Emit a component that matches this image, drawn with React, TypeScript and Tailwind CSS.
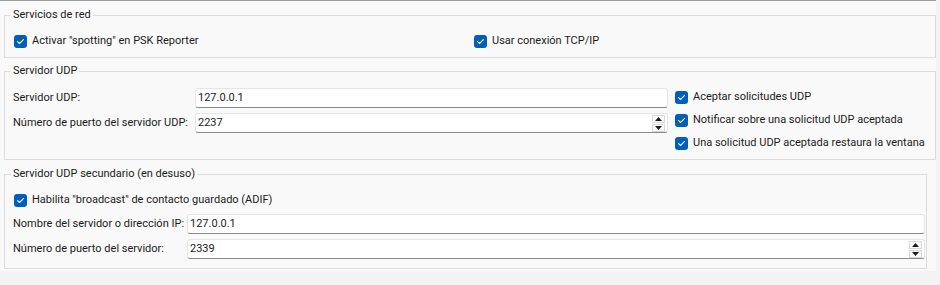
import React from "react";

const font = { fontFamily: 'Roboto, "Noto Sans", sans-serif' };

function Check({ label }: { label: string }) {
  return (
    <div className="flex h-[16px] items-center">
      <span className="flex h-[13px] w-[13px] items-center justify-center rounded-[3px] bg-[#005fb8]">
        <svg width="9" height="9" viewBox="0 0 9 9" fill="none">
          <path d="M1.6 4.7 L3.5 6.5 L7.4 2.6" stroke="white" strokeWidth="1.1" strokeLinecap="round" strokeLinejoin="round" />
        </svg>
      </span>
      <span className="ml-[5px] whitespace-nowrap text-[11px] leading-[16px] text-[#1b1b1b]">{label}</span>
    </div>
  );
}

function Input({ value, spin }: { value: string; spin?: boolean }) {
  return (
    <div className="flex h-[20px] flex-1 items-center rounded-[3px] border border-[#e5e5e5] border-b-[#8a8a8a] bg-white pl-[2px] pr-[2px]">
      <span className="flex-1 text-[11px] leading-[16px] text-[#1b1b1b]">{value}</span>
      {spin && (
        <div className="flex h-[17px] w-[13px] flex-col">
          <div className="flex h-[8px] items-center justify-center border border-[#d9d9d9] bg-[#fbfbfb]">
            <svg width="7" height="4" viewBox="0 0 7 4"><path d="M0 4 L3.5 0 L7 4 Z" fill="#1b1b1b" /></svg>
          </div>
          <div className="mt-[1px] flex h-[8px] items-center justify-center border border-[#d9d9d9] bg-[#fbfbfb]">
            <svg width="7" height="4" viewBox="0 0 7 4"><path d="M0 0 L3.5 4 L7 0 Z" fill="#1b1b1b" /></svg>
          </div>
        </div>
      )}
    </div>
  );
}

function Group({ title, className, children }: { title: string; className?: string; children: React.ReactNode }) {
  return (
    <fieldset className={"ml-[4px] border border-[#dcdcdc] " + (className ?? "")}>
      <legend className="ml-[6px] px-[2px] whitespace-nowrap text-[11px] leading-[16px] text-[#1b1b1b]">{title}</legend>
      {children}
    </fieldset>
  );
}

const lbl = "whitespace-nowrap text-[11px] leading-[16px] text-[#1b1b1b]";

export default function App() {
  return (
    <div className="flex h-[285px] w-[940px] bg-[#f3f3f3]" style={font}>
      <div className="flex h-[271px] w-[936px] flex-col bg-[#f9f9f9]">
        <div className="h-[1px] w-full bg-[#9c9c9c]" />
        <Group title="Servicios de red" className="mt-[6px] w-[932px]">
          <div className="mt-[10px] mb-[8px] flex pl-[9px]">
            <div className="w-[460px]">
              <Check label='Activar "spotting" en PSK Reporter' />
            </div>
            <Check label="Usar conexión TCP/IP" />
          </div>
        </Group>
        <Group title="Servidor UDP" className="mt-[5px] w-[932px]">
          <div className="flex pb-[8px]">
            <div className="mt-[9px] flex w-[663px] flex-col gap-[5px] pl-[8px]">
              <div className="flex items-center">
                <span className={"w-[182px] " + lbl}>Servidor UDP:</span>
                <Input value="127.0.0.1" />
              </div>
              <div className="flex items-center">
                <span className={"w-[182px] " + lbl}>Número de puerto del servidor UDP:</span>
                <Input value="2237" spin />
              </div>
            </div>
            <div className="ml-[7px] mt-[10px] flex flex-col gap-[7px]">
              <Check label="Aceptar solicitudes UDP" />
              <Check label="Notificar sobre una solicitud UDP aceptada" />
              <Check label="Una solicitud UDP aceptada restaura la ventana" />
            </div>
          </div>
        </Group>
        <Group title="Servidor UDP secundario (en desuso)" className="mt-[6px] w-[923px]">
          <div className="mt-[10px] pl-[9px]">
            <Check label='Habilita "broadcast" de contacto guardado (ADIF)' />
          </div>
          <div className="mt-[6px] mb-[9px] flex flex-col gap-[5px] pl-[8px] pr-[1px]">
            <div className="flex items-center">
              <span className={"w-[174px] " + lbl}>Nombre del servidor o dirección IP:</span>
              <Input value="127.0.0.1" />
            </div>
            <div className="flex items-center">
              <span className={"w-[174px] " + lbl}>Número de puerto del servidor:</span>
              <Input value="2339" spin />
            </div>
          </div>
        </Group>
      </div>
    </div>
  );
}
